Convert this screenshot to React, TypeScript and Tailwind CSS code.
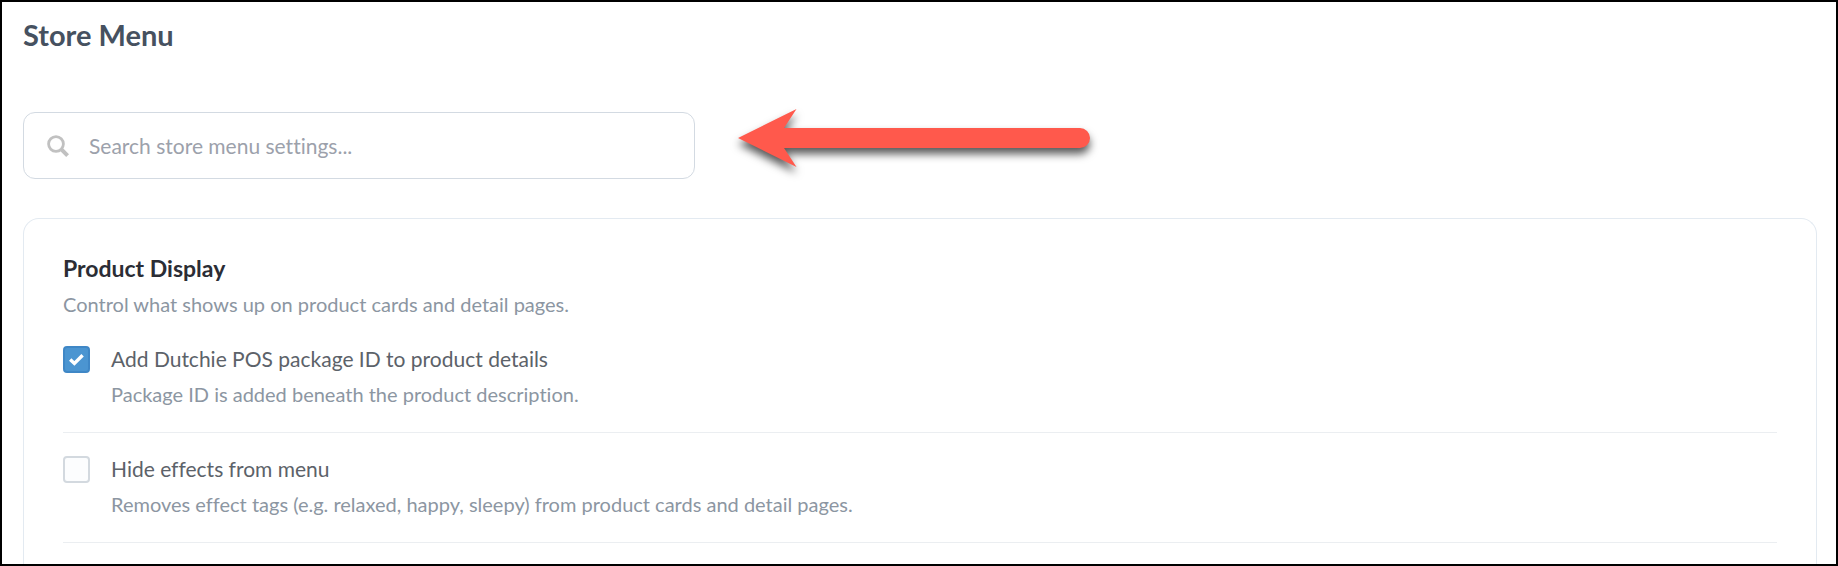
import React, { useState } from 'react';

interface Setting {
  id: string;
  label: string;
  description: string;
  enabled: boolean;
}

const SETTINGS: Setting[] = [
  {
    id: 'package-id',
    label: 'Add Dutchie POS package ID to product details',
    description: 'Package ID is added beneath the product description.',
    enabled: true,
  },
  {
    id: 'hide-effects',
    label: 'Hide effects from menu',
    description: 'Removes effect tags (e.g. relaxed, happy, sleepy) from product cards and detail pages.',
    enabled: false,
  },
];

const SearchIcon: React.FC = () => (
  <svg viewBox="0 0 22 22" className="w-[22px] h-[22px] shrink-0" fill="none" stroke="#c1c1c1" aria-hidden="true">
    <circle cx="9" cy="9" r="7.4" strokeWidth="2.8" />
    <path d="M14.4 14.4 L20.6 20.6" strokeWidth="4" />
  </svg>
);

const Arrow: React.FC = () => (
  <svg
    viewBox="0 0 352 58"
    className="mb-3 w-[352px] h-[58px] shrink-0 overflow-visible drop-shadow-[0_6px_4px_rgba(0,0,0,0.65)]"
    aria-hidden="true"
  >
    <path d="M0 29 L58.5 0 L46 19 H342 A10 10 0 0 1 342 39 H46 L58.5 58 Z" fill="#ff594c" />
  </svg>
);

interface SettingRowProps {
  setting: Setting;
  onToggle: (id: string) => void;
}

const SettingRow: React.FC<SettingRowProps> = ({ setting, onToggle }) => (
  <div className="flex gap-[21px] pt-[23px] pb-[26px] border-b border-[#ebeef1]">
    <div className="relative w-[27px] h-[27px] shrink-0">
      <input
        id={setting.id}
        type="checkbox"
        checked={setting.enabled}
        onChange={() => onToggle(setting.id)}
        aria-describedby={`${setting.id}-description`}
        className="block w-full h-full appearance-none rounded-[4px] border-2 border-[#d3d9df] bg-[#fcfdfe] checked:border-[#3f87c6] checked:bg-[#4b95d1]"
      />
      {setting.enabled && (
        <svg
          viewBox="0 0 27 27"
          className="absolute inset-0 pointer-events-none"
          fill="none"
          stroke="#ffffff"
          strokeWidth="3.4"
          aria-hidden="true"
        >
          <path d="M7.2 13.4 L11.4 17.4 L19.6 9.2" />
        </svg>
      )}
    </div>
    <div>
      <label htmlFor={setting.id} className="block text-[21px] leading-[26px] text-[#5c6269]">
        {setting.label}
      </label>
      <p id={`${setting.id}-description`} className="mt-2.5 text-xl leading-6 text-[#8c96a2]">
        {setting.description}
      </p>
    </div>
  </div>
);

export default function App() {
  const [query, setQuery] = useState('');
  const [settings, setSettings] = useState(SETTINGS);

  const handleToggle = (id: string) => {
    setSettings(settings.map(s => (s.id === id ? { ...s, enabled: !s.enabled } : s)));
  };

  return (
    <main className="min-h-screen flex flex-col pt-[15px] pl-[21px] pr-[19px] border-2 border-black bg-white font-['Lato','Open_Sans',sans-serif] [font-variant-ligatures:no-common-ligatures]">
      <h1 className="text-[29px] leading-9 font-bold text-[#465160]">Store Menu</h1>

      <div className="mt-14 flex items-end gap-[43px]">
        <div className="w-full max-w-[672px] h-[67px] flex items-center gap-5 px-[23px] rounded-xl border border-[#d3dae2]">
          <SearchIcon />
          <input
            type="search"
            value={query}
            onChange={e => setQuery(e.target.value)}
            aria-label="Search store menu settings"
            placeholder="Search store menu settings..."
            className="flex-1 min-w-0 text-[21px] leading-[26px] text-[#5c6269] placeholder:text-[#9ca1ab] outline-none"
          />
        </div>
        <Arrow />
      </div>

      <section className="mt-[39px] flex-1 pt-[35px] px-[39px] rounded-t-2xl border border-b-0 border-[#e3eaf1]">
        <h2 className="text-[23px] leading-7 font-bold text-[#2b2d35]">Product Display</h2>
        <p className="mt-2.5 text-xl leading-6 text-[#8c96a2]">
          Control what shows up on product cards and detail pages.
        </p>
        <div className="mt-[7px]">
          {settings.map(setting => (
            <SettingRow key={setting.id} setting={setting} onToggle={handleToggle} />
          ))}
        </div>
      </section>
    </main>
  );
}
